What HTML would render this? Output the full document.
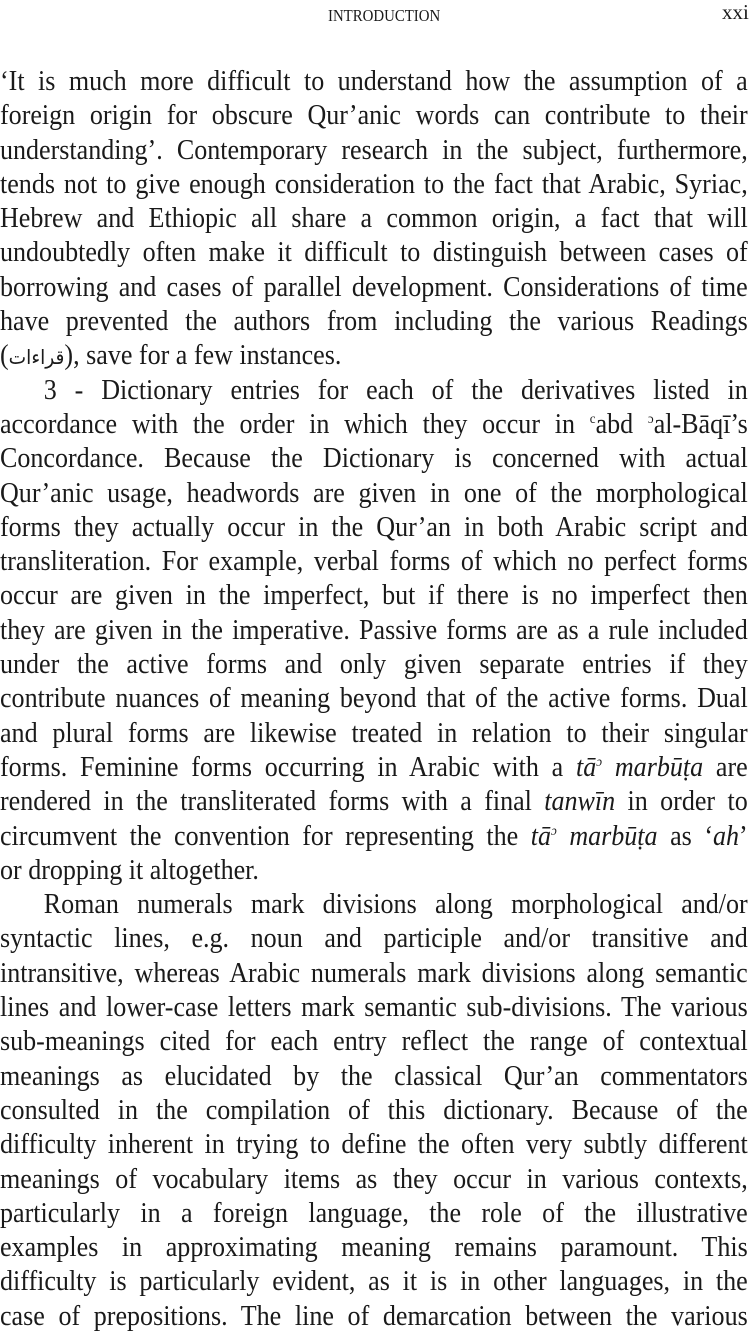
<!DOCTYPE html>
<html><head><meta charset="utf-8"><style>
html,body{margin:0;padding:0;background:#fff;}
body{width:750px;height:1330px;overflow:hidden;position:relative;color:#1a1a1a;font-family:"Liberation Serif","Noto Serif CJK SC",serif;}
.hdr{position:absolute;top:6px;left:328px;font-size:16.5px;transform:scaleX(0.9);transform-origin:left top;}
.pg{position:absolute;top:0px;left:722px;font-size:21px;}
.wrap{position:absolute;left:0;top:65px;width:804px;transform:scaleX(0.93);transform-origin:left top;}
.l{height:34.3px;line-height:34.3px;font-size:28px;white-space:nowrap;text-align:justify;text-align-last:justify;}
.l.e{text-align-last:left;}
.i{padding-left:47px;}
sup{font-size:14px;vertical-align:10px;line-height:0;}
</style></head><body>
<div class="hdr">INTRODUCTION</div>
<div class="pg">xxi</div>
<div class="wrap">
<div class="l">‘It is much more difficult to understand how the assumption of a</div>
<div class="l">foreign origin for obscure Qur’anic words can contribute to their</div>
<div class="l">understanding’. Contemporary research in the subject, furthermore,</div>
<div class="l">tends not to give enough consideration to the fact that Arabic, Syriac,</div>
<div class="l">Hebrew and Ethiopic all share a common origin, a fact that will</div>
<div class="l">undoubtedly often make it difficult to distinguish between cases of</div>
<div class="l">borrowing and cases of parallel development. Considerations of time</div>
<div class="l">have prevented the authors from including the various Readings</div>
<div class="l e">(<span style="font-family:'DejaVu Sans',sans-serif;font-size:20px">قراءات</span>), save for a few instances.</div>
<div class="l i">3 - Dictionary entries for each of the derivatives listed in</div>
<div class="l">accordance with the order in which they occur in <sup>c</sup>abd <sup>ɔ</sup>al-Bāqī’s</div>
<div class="l">Concordance. Because the Dictionary is concerned with actual</div>
<div class="l">Qur’anic usage, headwords are given in one of the morphological</div>
<div class="l">forms they actually occur in the Qur’an in both Arabic script and</div>
<div class="l">transliteration. For example, verbal forms of which no perfect forms</div>
<div class="l">occur are given in the imperfect, but if there is no imperfect then</div>
<div class="l">they are given in the imperative. Passive forms are as a rule included</div>
<div class="l">under the active forms and only given separate entries if they</div>
<div class="l">contribute nuances of meaning beyond that of the active forms. Dual</div>
<div class="l">and plural forms are likewise treated in relation to their singular</div>
<div class="l">forms. Feminine forms occurring in Arabic with a <i>tā<sup>ɔ</sup> marbūṭa</i> are</div>
<div class="l">rendered in the transliterated forms with a final <i>tanwīn</i> in order to</div>
<div class="l">circumvent the convention for representing the <i>tā<sup>ɔ</sup> marbūṭa</i> as ‘<i>ah</i>’</div>
<div class="l e">or dropping it altogether.</div>
<div class="l i">Roman numerals mark divisions along morphological and/or</div>
<div class="l">syntactic lines, e.g. noun and participle and/or transitive and</div>
<div class="l">intransitive, whereas Arabic numerals mark divisions along semantic</div>
<div class="l">lines and lower-case letters mark semantic sub-divisions. The various</div>
<div class="l">sub-meanings cited for each entry reflect the range of contextual</div>
<div class="l">meanings as elucidated by the classical Qur’an commentators</div>
<div class="l">consulted in the compilation of this dictionary. Because of the</div>
<div class="l">difficulty inherent in trying to define the often very subtly different</div>
<div class="l">meanings of vocabulary items as they occur in various contexts,</div>
<div class="l">particularly in a foreign language, the role of the illustrative</div>
<div class="l">examples in approximating meaning remains paramount. This</div>
<div class="l">difficulty is particularly evident, as it is in other languages, in the</div>
<div class="l">case of prepositions. The line of demarcation between the various</div>
</div>
</body></html>
